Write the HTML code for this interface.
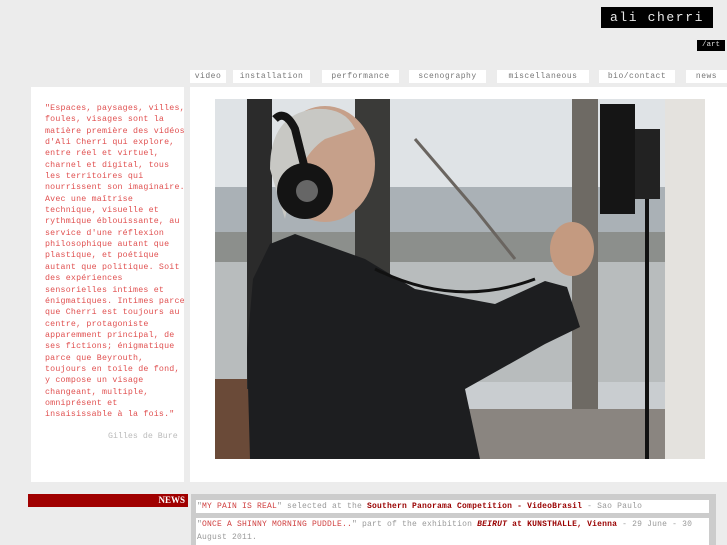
<!DOCTYPE html>
<html><head><meta charset="utf-8"><style>
*{margin:0;padding:0;box-sizing:border-box}
html,body{width:727px;height:545px;overflow:hidden}
body{background:#ececec;position:relative;font-family:"Liberation Mono",monospace}
.abs{position:absolute}
.title{left:601px;top:7px;width:112px;height:21px;background:#000;color:#e8e8e8;font-size:13px;letter-spacing:1.6px;line-height:21px;text-align:center}
.art{left:697px;top:40px;width:28px;height:11px;background:#000;color:#ddd;font-size:7.5px;line-height:11px;text-align:center}
.tab{top:70px;height:13px;background:#fff;color:#777;font-size:8px;line-height:13px;text-align:center;letter-spacing:.5px}
.panel{background:#fff}
.quote{left:45px;top:103px;width:142px;color:#e05050;font-size:8.3px;line-height:11.35px;letter-spacing:0.2px}
.sig{left:108px;top:432px;color:#bbb;font-size:8.3px}
.news{left:28px;top:494px;width:160px;height:13px;background:#a00000;color:#fff;font-family:"Liberation Serif",serif;font-weight:bold;font-size:9px;line-height:13px;text-align:right;padding-right:3px}
.nbox{left:191px;top:494px;width:525px;height:60px;background:#ccc}
.entry{background:#fff;color:#999;font-size:8px;line-height:13px;padding-left:1px;letter-spacing:0.2px}
.entry .r{color:#d04040}
.entry b{color:#900}
</style></head><body>
<div class="abs title">ali cherri</div>
<div class="abs art">/art</div>
<div class="abs tab" style="left:190px;width:36px">video</div>
<div class="abs tab" style="left:233px;width:77px">installation</div>
<div class="abs tab" style="left:322px;width:77px">performance</div>
<div class="abs tab" style="left:409px;width:77px">scenography</div>
<div class="abs tab" style="left:497px;width:92px">miscellaneous</div>
<div class="abs tab" style="left:599px;width:76px">bio/contact</div>
<div class="abs tab" style="left:686px;width:41px">news</div>
<div class="abs panel" style="left:31px;top:87px;width:153px;height:395px"></div>
<div class="abs panel" style="left:190px;top:87px;width:537px;height:395px"></div>
<div class="abs quote">"Espaces, paysages, villes, foules, visages sont la matière première des vidéos d'Ali Cherri qui explore, entre réel et virtuel, charnel et digital, tous les territoires qui nourrissent son imaginaire. Avec une maîtrise technique, visuelle et rythmique éblouissante, au service d'une réflexion philosophique autant que plastique, et poétique autant que politique. Soit des expériences sensorielles intimes et énigmatiques. Intimes parce que Cherri est toujours au centre, protagoniste apparemment principal, de ses fictions; énigmatique parce que Beyrouth, toujours en toile de fond, y compose un visage changeant, multiple, omniprésent et insaisissable à la fois."</div>
<div class="abs sig">Gilles de Bure</div>
<svg class="abs" style="left:215px;top:99px" width="490" height="360" viewBox="0 0 490 360">
<rect width="490" height="360" fill="#c9cdd0"/>
<rect width="490" height="90" fill="#dfe3e6"/>
<rect y="88" width="490" height="45" fill="#aab1b6"/>
<rect y="133" width="490" height="30" fill="#8c8f8c"/>
<rect y="163" width="490" height="120" fill="#b8bcbd"/>
<rect y="280" width="60" height="80" fill="#6a4a38"/>
<rect x="32" y="0" width="25" height="290" fill="#2b2b2b"/>
<rect x="140" y="0" width="35" height="200" fill="#3a3a38"/>
<rect x="357" y="0" width="26" height="330" fill="#6e6a64"/>
<rect x="250" y="310" width="200" height="50" fill="#8a8580"/>
<rect x="450" y="0" width="40" height="360" fill="#e4e2de"/>
<path d="M200 40 L260 110 L300 160" stroke="#6a6560" stroke-width="3" fill="none"/>
<rect x="385" y="5" width="35" height="110" fill="#151515"/>
<rect x="430" y="85" width="4" height="275" fill="#111"/>
<rect x="420" y="30" width="25" height="70" fill="#222"/>
<path d="M35 360 L32 250 L38 180 L55 145 L80 135 L150 160 L200 190 L280 205 L330 182 L352 188 L365 228 L330 245 L250 290 L265 360 Z" fill="#1d1e20"/>
<path d="M160 170 Q240 210 320 180" stroke="#111" stroke-width="3" fill="none"/>
<ellipse cx="110" cy="65" rx="50" ry="58" fill="#c6a08a"/>
<path d="M55 70 Q55 15 100 10 Q130 8 140 30 L110 40 Q80 60 70 120 Z" fill="#c8c8c4"/>
<circle cx="90" cy="92" r="28" fill="#141414"/>
<circle cx="92" cy="92" r="11" fill="#666"/>
<path d="M60 20 Q70 10 80 30 L90 70" stroke="#141414" stroke-width="8" fill="none"/>
<ellipse cx="357" cy="150" rx="22" ry="27" fill="#c49a80"/>
</svg>
<div class="abs news">NEWS</div>
<div class="abs nbox"></div>
<div class="abs entry" style="left:196px;top:500px;width:513px;height:13px">"<span class="r">MY PAIN IS REAL</span>" selected at the <b>Southern Panorama Competition - VideoBrasil</b> - Sao Paulo</div>
<div class="abs entry" style="left:196px;top:518px;width:513px;height:30px">"<span class="r">ONCE A SHINNY MORNING PUDDLE..</span>" part of the exhibition <b><i>BEIRUT</i> at KUNSTHALLE, Vienna</b> - 29 June - 30 August 2011.</div>
</body></html>
